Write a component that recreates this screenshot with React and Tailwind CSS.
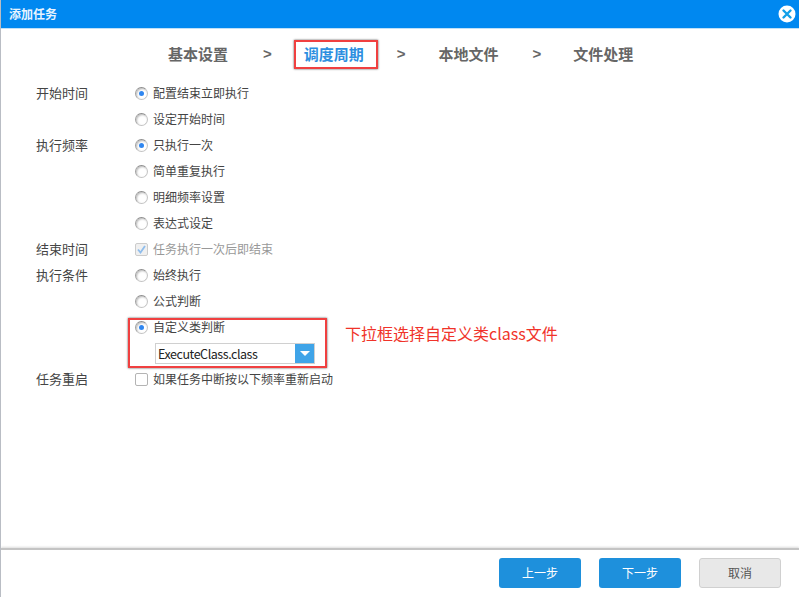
import React from 'react';

const font = { fontFamily: '"Noto Sans CJK SC", "Liberation Sans", sans-serif' };

function Radio({ checked }) {
  return (
    <span className="w-[13px] h-[13px] shrink-0 rounded-full border border-[#c4c4c4] border-t-[#8f8f8f] border-l-[#a0a0a0] shadow-[inset_1px_1px_2px_#bbb] bg-white flex items-center justify-center">
      {checked && <span className="w-[5px] h-[5px] rounded-full bg-[#2f86f0]" />}
    </span>
  );
}

function Row({ label, text, checked }) {
  return (
    <div className="flex items-center h-[26px]">
      <div className="w-[99px] text-[13px] text-[#444]">{label}</div>
      <Radio checked={checked} />
      <div className="ml-[5px] text-xs text-[#444]">{text}</div>
    </div>
  );
}

function Sep() {
  return <span className="text-[15px] font-bold text-[#666] font-['Liberation_Sans'] -mt-[1px]">&gt;</span>;
}

export default function App() {
  return (
    <div className="w-[799px] h-[597px] flex flex-col bg-white overflow-hidden border-l border-[#b9bdc4]" style={font}>
      <div className="h-[29px] -ml-px bg-[#0088f0] border-b border-[#bfe0f8] flex items-center justify-between pl-[9px] pr-[3px] shrink-0">
        <span className="text-xs font-bold text-[#e8f4ff]">添加任务</span>
        <svg width="18" height="18" viewBox="0 0 18 18">
          <circle cx="9" cy="9" r="8.5" fill="#fff" />
          <path d="M5.5 5.5 12.5 12.5M12.5 5.5 5.5 12.5" stroke="#12a0e8" strokeWidth="2.4" strokeLinecap="round" />
        </svg>
      </div>

      <div className="h-[51px] shrink-0 flex items-center pl-[167px] text-[15px] font-bold text-[#666]">
        <span>基本设置</span>
        <span className="ml-[35px] mr-[32px] flex"><Sep /></span>
        <span className="relative text-[#2d8fe0]">
          调度周期
          <span className="absolute -left-[10px] -right-[14px] -top-[3px] h-[29px] border-2 border-[#f04040] shadow-[0_0_2px_#555]" />
        </span>
        <span className="ml-[33px] mr-[33px] flex"><Sep /></span>
        <span>本地文件</span>
        <span className="ml-[34px] mr-[32px] flex"><Sep /></span>
        <span>文件处理</span>
      </div>

      <div className="pl-[35px] flex flex-col">
        <Row label="开始时间" text="配置结束立即执行" checked />
        <Row text="设定开始时间" />
        <Row label="执行频率" text="只执行一次" checked />
        <Row text="简单重复执行" />
        <Row text="明细频率设置" />
        <Row text="表达式设定" />
        <div className="flex items-center h-[26px]">
          <div className="w-[99px] text-[13px] text-[#444]">结束时间</div>
          <span className="w-[13px] h-[13px] shrink-0 rounded-[2px] border border-[#ccc] bg-[#f0f0f0] flex items-center justify-center">
            <svg width="11" height="11" viewBox="0 0 11 11">
              <path d="M2 5.5 4.5 8.5 9 2" fill="none" stroke="#8fbdec" strokeWidth="1.8" />
            </svg>
          </span>
          <div className="ml-[5px] text-xs text-[#999]">任务执行一次后即结束</div>
        </div>
        <Row label="执行条件" text="始终执行" />
        <Row text="公式判断" />
        <div className="relative">
          <Row text="自定义类判断" checked />
          <div className="ml-[119px] mt-[3px] w-[160px] h-[21px] flex border border-[#d0d0d0]">
            <div className="flex-1 text-[12.5px] tracking-[-0.45px] leading-[19px] pl-[2px] text-[#222]">ExecuteClass.class</div>
            <div className="w-[19px] bg-[#3fa4e8] flex items-center justify-center">
              <span className="w-0 h-0 border-l-[5px] border-r-[5px] border-t-[5px] border-l-transparent border-r-transparent border-t-white" />
            </div>
          </div>
          <div className="absolute left-[92px] top-[4px] w-[199px] h-[50px] border-2 border-[#f04040] shadow-[0_0_2px_#555]" />
          <div className="absolute left-[309px] top-[7px] text-base text-[#f0332a] whitespace-nowrap">下拉框选择自定义类class文件</div>
        </div>
        <div className="flex items-center h-[26px] mt-[2px]">
          <div className="w-[99px] text-[13px] text-[#444]">任务重启</div>
          <span className="w-[13px] h-[13px] shrink-0 rounded-[2px] border border-[#b4b4b4] bg-white" />
          <div className="ml-[5px] text-xs text-[#444]">如果任务中断按以下频率重新启动</div>
        </div>
      </div>

      <div className="mt-auto h-[49px] shrink-0 border-t-2 border-[#c4c4c4] shadow-[0_-1px_2px_#ddd] flex items-start justify-end gap-[18px] pr-[18px] pt-[8px]">
        <button className="w-[82px] h-[30px] rounded-[3px] bg-[#1e90dc] text-xs text-white">上一步</button>
        <button className="w-[82px] h-[30px] rounded-[3px] bg-[#1e90dc] text-xs text-white">下一步</button>
        <button className="w-[82px] h-[30px] rounded-[3px] bg-[#e8e8e8] border border-[#d0d0d0] text-xs text-[#555]">取消</button>
      </div>
    </div>
  );
}
